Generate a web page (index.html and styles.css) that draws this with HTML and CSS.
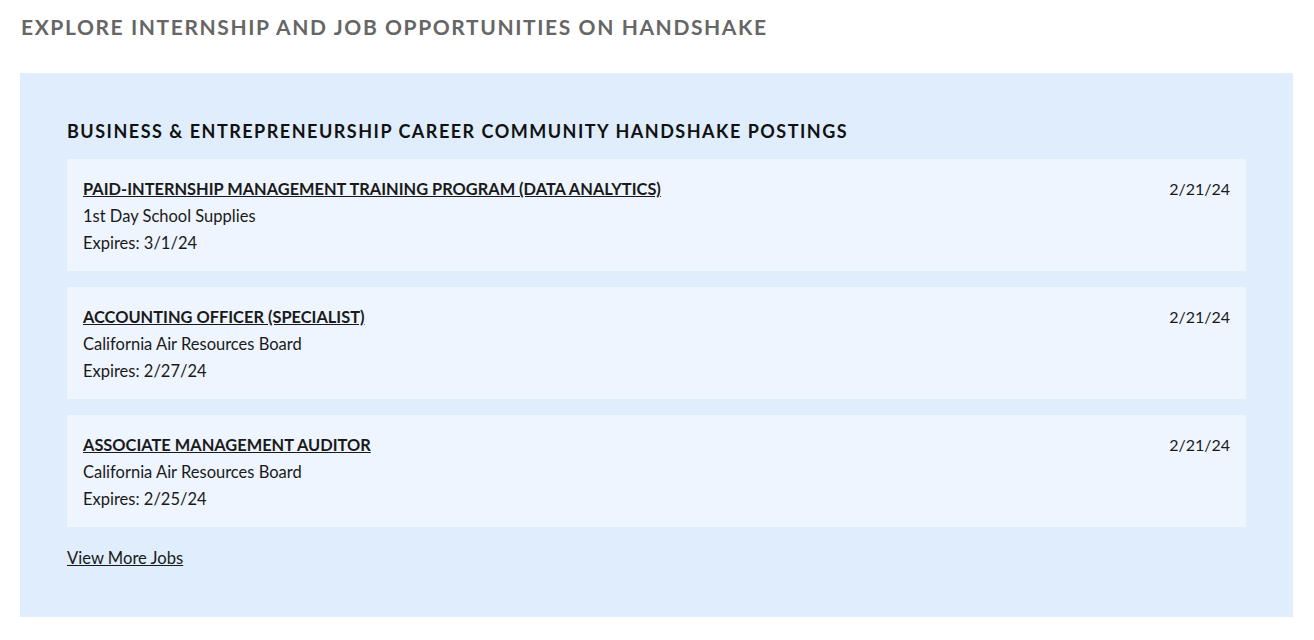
FILE: index.html
```html
<!DOCTYPE html>
<html lang="en">
<head>
<meta charset="utf-8">
<title>Handshake postings</title>
<link rel="stylesheet" href="styles.css">
</head>
<body>
<div class="page">
  <h2 class="page-title">Explore Internship and Job Opportunities on Handshake</h2>
  <section class="panel">
    <h3 class="panel-title">Business &amp; Entrepreneurship Career Community Handshake Postings</h3>
    <ul class="jobs">
      <li class="job">
        <div class="job-info">
          <a class="job-title" href="#">Paid-Internship Management Training Program (Data Analytics)</a>
          <div class="job-line">1st Day School Supplies</div>
          <div class="job-line">Expires: 3/1/24</div>
        </div>
        <div class="job-date">2/21/24</div>
      </li>
      <li class="job">
        <div class="job-info">
          <a class="job-title" href="#">Accounting Officer (Specialist)</a>
          <div class="job-line">California Air Resources Board</div>
          <div class="job-line">Expires: 2/27/24</div>
        </div>
        <div class="job-date">2/21/24</div>
      </li>
      <li class="job">
        <div class="job-info">
          <a class="job-title" href="#">Associate Management Auditor</a>
          <div class="job-line">California Air Resources Board</div>
          <div class="job-line">Expires: 2/25/24</div>
        </div>
        <div class="job-date">2/21/24</div>
      </li>
    </ul>
    <a class="more" href="#">View More Jobs</a>
  </section>
</div>
</body>
</html>
```
FILE: styles.css
```css
* { box-sizing: border-box; }
html, body { margin: 0; padding: 0; background: #fff; }
body { font-family: Lato, "Open Sans", sans-serif; color: #1a1a1a; }
.page { padding: 0 21px 0 20px; }
.page-title {
  margin: 0;
  padding: 14px 0 0 1px;
  height: 73px;
  font-size: 21px;
  line-height: 26px;
  font-weight: 700;
  letter-spacing: 1.6px;
  text-transform: uppercase;
  color: #666666;
}
.panel {
  background: #dfedfc;
  padding: 47px 47px 45px;
  display: flex;
  flex-direction: column;
}
.panel-title {
  margin: 0 0 17px;
  font-size: 18px;
  line-height: 22px;
  font-weight: 700;
  letter-spacing: 1.5px;
  text-transform: uppercase;
  color: #111;
}
.jobs {
  list-style: none;
  margin: 0;
  padding: 0;
  display: flex;
  flex-direction: column;
  gap: 16px;
}
.job {
  background: #eef5fe;
  padding: 17px 16px 14px 16px;
  display: flex;
  justify-content: space-between;
  align-items: flex-start;
}
.job-info { display: flex; flex-direction: column; }
.job-title, .job-line, .job-date {
  font-size: 16.5px;
  line-height: 27px;
  color: #1a1a1a;
}
.job-title {
  font-size: 16.4px;
  line-height: 25px;
  margin-bottom: 2px;
  font-weight: 700;
  text-transform: uppercase;
  text-decoration: underline;
  align-self: flex-start;
}
.job-date {
  font-size: 16px;
  line-height: 25px;
}
.more {
  margin-top: 18px;
  align-self: flex-start;
  font-size: 16.6px;
  line-height: 27px;
  color: #1a1a1a;
  text-decoration: underline;
}
```
